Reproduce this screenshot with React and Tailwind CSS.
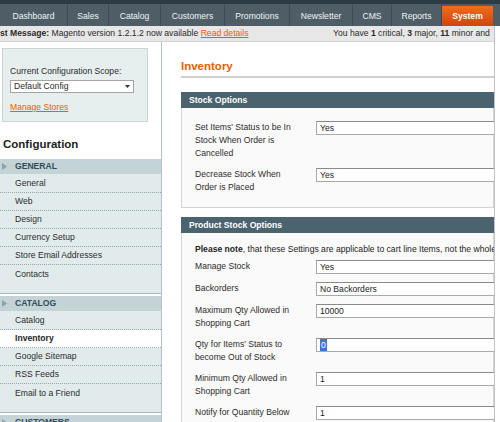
const NAV = [
  { label: 'Dashboard', w: 'w-[68px]' },
  { label: 'Sales', w: 'w-[41px]' },
  { label: 'Catalog', w: 'w-[52px]' },
  { label: 'Customers', w: 'w-[64px]' },
  { label: 'Promotions', w: 'w-[65px]' },
  { label: 'Newsletter', w: 'w-[63px]' },
  { label: 'CMS', w: 'w-[39px]' },
  { label: 'Reports', w: 'w-[50px]' },
];

const SECTIONS = [
  {
    title: 'GENERAL',
    items: ['General', 'Web', 'Design', 'Currency Setup', 'Store Email Addresses', 'Contacts'],
  },
  {
    title: 'CATALOG',
    items: ['Catalog', 'Inventory', 'Google Sitemap', 'RSS Feeds', 'Email to a Friend'],
    active: 'Inventory',
  },
];

function Arrow() {
  return (
    <svg width="5" height="7" viewBox="0 0 5 7" className="ml-[2px] mr-[8px] shrink-0">
      <path d="M0 0 L5 3.5 L0 7 Z" fill="#8da2a8" />
    </svg>
  );
}

function SideSection({ title, items, active }) {
  return (
    <div className="border-b border-[#a9b7ba] bg-[#e2ebec] mb-[2px]">
      <div className="h-[15px] bg-[#c4d3d6] flex items-center font-bold text-[#2f4d59]">
        <Arrow />
        {title}
      </div>
      <ul className="pt-[1px] pb-[10px]">
        {items.map((it, i) => (
          <li
            key={it}
            className={`h-[18px] flex items-center pl-[15px] ${
              i < items.length - 1 ? 'border-b border-dotted border-[#9aa5a8]' : ''
            } ${it === active ? 'bg-white font-bold text-[#1e1e1e]' : 'text-[#2b2b2b]'}`}
          >
            {it}
          </li>
        ))}
      </ul>
    </div>
  );
}

function Field({ label, value, selected }) {
  return (
    <div className="flex items-start pb-[8px]">
      <div className="w-[106px] shrink-0 text-[#2b2b2b]">{label}</div>
      <div className="ml-[15px] w-[260px] shrink-0 h-[14px] border border-[#a9a9a9] border-t-[#8a8a8a] bg-white pl-[3px] flex items-center leading-[12px] text-[#222]">
        {selected ? <span className="bg-[#3a78d6] text-white px-[1px]">{value}</span> : value}
      </div>
    </div>
  );
}

function FieldsetHead({ children }) {
  return (
    <div className="h-[16px] bg-[#4b636e] text-white font-bold pl-[8px] flex items-center">
      {children}
    </div>
  );
}

export default function App() {
  return (
    <div className="w-[500px] h-[422px] overflow-hidden bg-white font-['Liberation_Sans',Arial,sans-serif] text-[8.6px] leading-[13px] text-[#2b2b2b]">
      {/* top nav */}
      <div className="h-[26px] bg-[#4f5e66] border-t-[4px] border-[#2d3b42] flex">
        {NAV.map((n) => (
          <div
            key={n.label}
            className={`${n.w} h-[22px] pt-[2px] flex items-center justify-center text-[#eef3f4] border-r border-[#3c4a51]`}
          >
            {n.label}
          </div>
        ))}
        <div className="w-[51px] h-[20px] mt-[2px] flex items-center justify-center font-bold text-white bg-gradient-to-b from-[#f06c1e] to-[#cf450d]">
          System
        </div>
      </div>

      <div className="flex">
        <div className="w-[495px] shrink-0 border-r border-[#bfc4c6] overflow-hidden h-[396px]">
          {/* message bar */}
          <div className="h-[16px] bg-[#e7e7e7] border-b border-[#d4d4d4] flex items-center whitespace-nowrap text-[#2a2a2a]">
            <div className="w-[333px] shrink-0">
              <b>st Message:</b> Magento version 1.2.1.2 now available{' '}
              <span className="text-[#eb5e00] underline">Read details</span>
            </div>
            <div>
              You have <b>1</b> critical, <b>3</b> major, <b>11</b> minor and
            </div>
          </div>

          <div className="flex">
            {/* left column */}
            <div className="w-[162px] shrink-0 border-r border-[#b6c2c5] h-[380px]">
              <div className="mt-[6px] ml-[2px] w-[146px] h-[74px] border border-[#c6d5d7] bg-[#e6eeee] pl-[7px] pt-[16px]">
                <div className="text-[#2b2b2b]">Current Configuration Scope:</div>
                <div className="mt-[2px] w-[124px] h-[13px] border border-[#a5a5a5] bg-white flex items-center justify-between px-[3px] leading-[11px]">
                  <span>Default Config</span>
                  <svg width="5" height="3" viewBox="0 0 5 3">
                    <path d="M0 0 L5 0 L2.5 3 Z" fill="#333" />
                  </svg>
                </div>
                <div className="mt-[8px] text-[#eb5e00] underline">Manage Stores</div>
              </div>
              <div className="mt-[15px] pl-[3px] text-[11.5px] leading-[15px] font-bold text-[#222]">
                Configuration
              </div>
              <div className="mt-[7px]">
                {SECTIONS.map((s) => (
                  <SideSection key={s.title} {...s} />
                ))}
                <div className="h-[15px] bg-[#c4d3d6] flex items-center font-bold text-[#2f4d59]">
                  <Arrow />
                  CUSTOMERS
                </div>
              </div>
            </div>

            {/* main */}
            <div className="flex-1 pl-[19px] overflow-hidden">
              <div className="mt-[17px] h-[19px] border-b-2 border-[#cfcfcf] text-[11.5px] leading-[15px] font-bold text-[#eb5e00]">
                Inventory
              </div>

              <div className="mt-[14px]">
                <FieldsetHead>Stock Options</FieldsetHead>
                <div className="bg-[#fafafa] border border-t-0 border-[#d4d4d4] pt-[13px] pl-[13px] pb-[5px]">
                  <Field label="Set Items' Status to be In Stock When Order is Cancelled" value="Yes" />
                  <Field label="Decrease Stock When Order is Placed" value="Yes" />
                </div>
              </div>

              <div className="mt-[9px]">
                <FieldsetHead>Product Stock Options</FieldsetHead>
                <div className="bg-[#fafafa] border border-t-0 border-[#d4d4d4] pt-[10px] pl-[13px] pb-[5px]">
                  <div className="h-[13px] mb-[4px] whitespace-nowrap text-[#222]">
                    <b>Please note</b>, that these Settings are applicable to cart line Items, not the whole cart.
                  </div>
                  <Field label="Manage Stock" value="Yes" />
                  <Field label="Backorders" value="No Backorders" />
                  <Field label="Maximum Qty Allowed in Shopping Cart" value="10000" />
                  <Field label="Qty for Items' Status to become Out of Stock" value="0" selected />
                  <Field label="Minimum Qty Allowed in Shopping Cart" value="1" />
                  <Field label="Notify for Quantity Below" value="1" />
                </div>
              </div>
            </div>
          </div>
        </div>
      </div>
    </div>
  );
}
